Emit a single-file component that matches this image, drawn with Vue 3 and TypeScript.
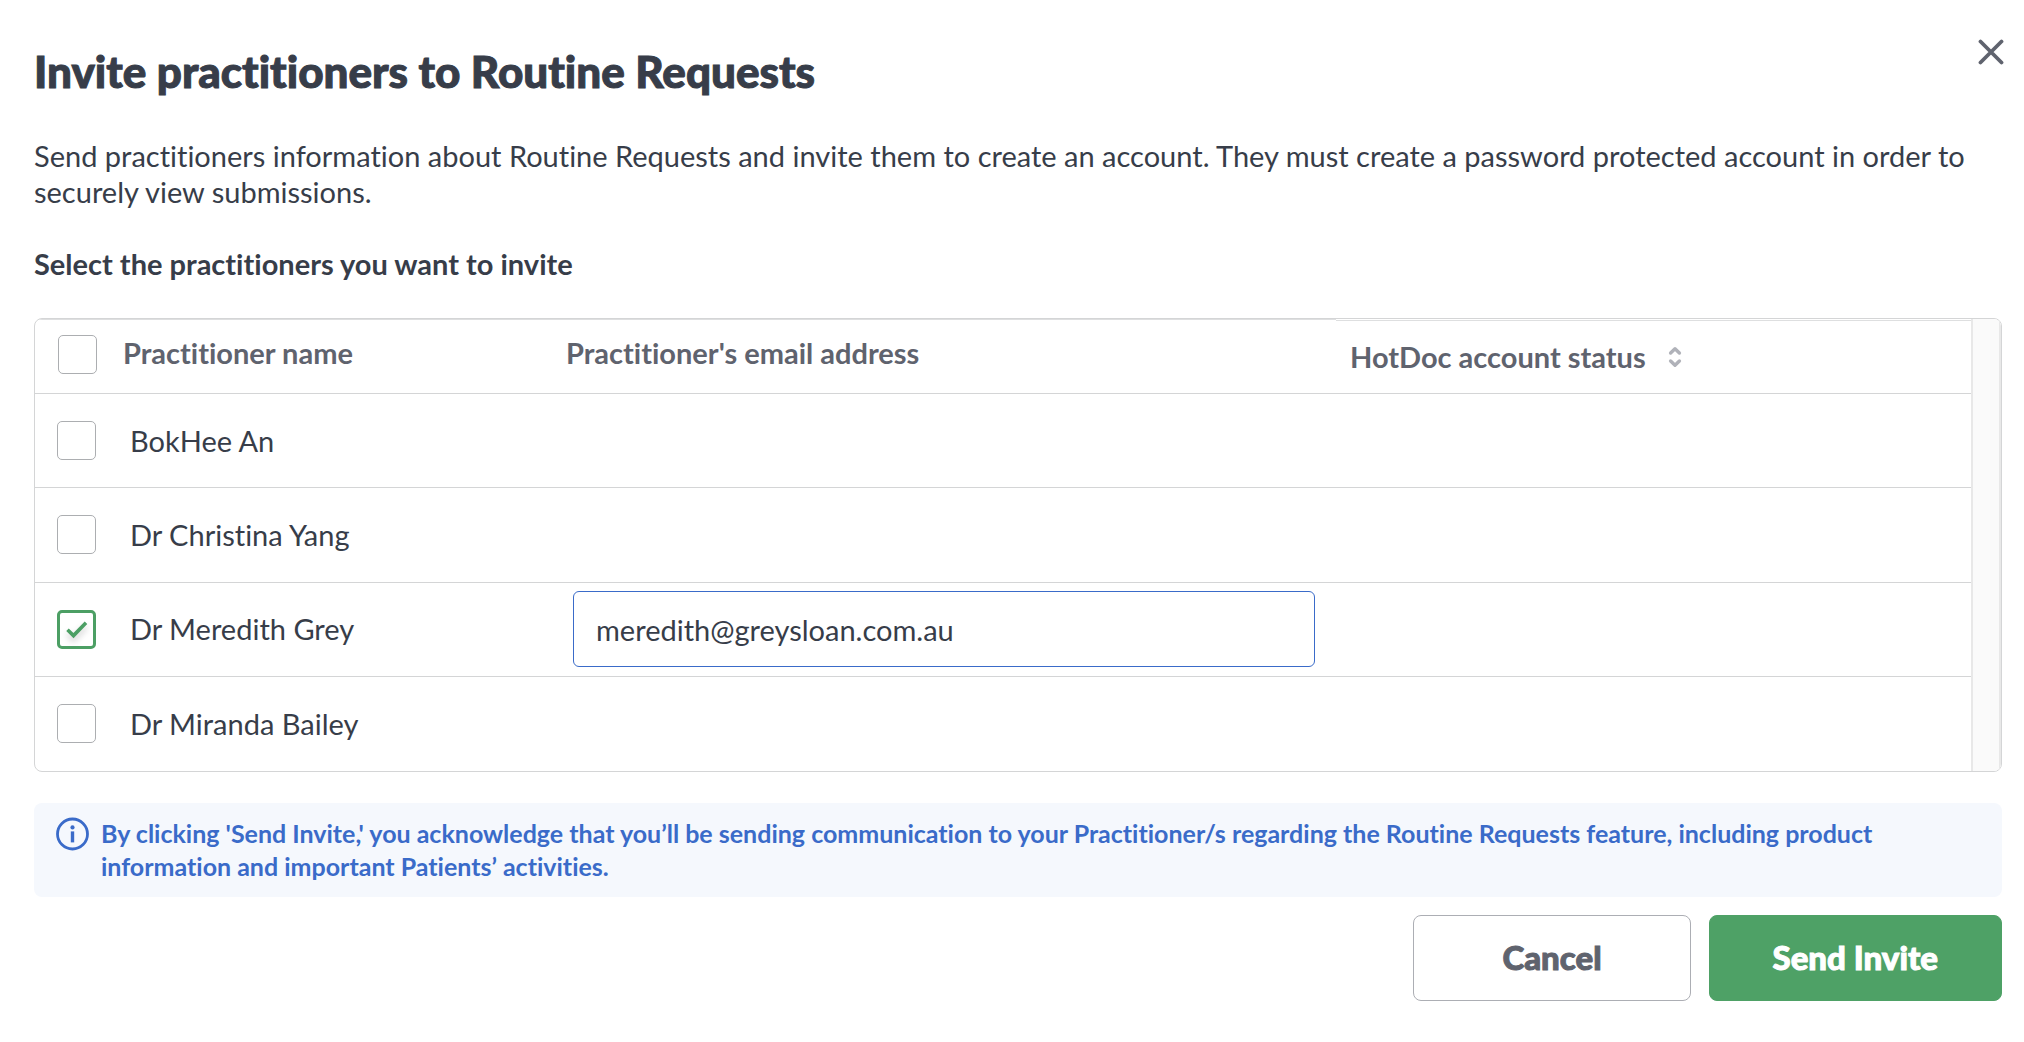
<script setup lang="ts">
import { reactive } from 'vue'

interface Practitioner {
  id: number
  name: string
  email: string
  selected: boolean
}

const practitioners = reactive<Practitioner[]>([
  { id: 1, name: 'BokHee An', email: '', selected: false },
  { id: 2, name: 'Dr Christina Yang', email: '', selected: false },
  { id: 3, name: 'Dr Meredith Grey', email: 'meredith@greysloan.com.au', selected: true },
  { id: 4, name: 'Dr Miranda Bailey', email: '', selected: false },
])

function toggleAll(event: Event) {
  const checked = (event.target as HTMLInputElement).checked
  practitioners.forEach((p) => {
    p.selected = checked
  })
}
</script>

<template>
  <main class="dialog" role="dialog" aria-labelledby="dialog-title">
    <header class="dialog-header">
      <h1 id="dialog-title">Invite practitioners to Routine Requests</h1>
      <button class="close" type="button" aria-label="Close">
        <svg viewBox="0 0 26 26" width="26" height="26" aria-hidden="true">
          <path d="M2.5 2.5 23.5 23.5M23.5 2.5 2.5 23.5" fill="none" stroke="#5f636e" stroke-width="3.8" stroke-linecap="round" />
        </svg>
      </button>
    </header>

    <p class="intro">
      Send practitioners information about Routine Requests and invite them to create an account. They must create a
      password protected account in order to securely view submissions.
    </p>
    <h2>Select the practitioners you want to invite</h2>

    <div class="table-frame">
      <table>
        <colgroup>
          <col class="col-check" />
          <col class="col-name" />
          <col class="col-email" />
          <col />
        </colgroup>
        <thead>
          <tr>
            <th class="check-cell" scope="col">
              <span class="check">
                <input type="checkbox" aria-label="Select all practitioners" @change="toggleAll" />
              </span>
            </th>
            <th scope="col">Practitioner name</th>
            <th scope="col">Practitioner's email address</th>
            <th class="status-head" scope="col">
              <button class="sort" type="button">
                HotDoc account status
                <svg viewBox="0 0 14 22" width="14" height="22" aria-hidden="true">
                  <path d="M2.6 7 7 2.8 11.4 7M2.6 15 7 19.2 11.4 15" fill="none" stroke="#b0b2b9" stroke-width="3.4" stroke-linecap="round" stroke-linejoin="round" />
                </svg>
              </button>
            </th>
          </tr>
        </thead>
        <tbody>
          <tr v-for="p in practitioners" :key="p.id">
            <td class="check-cell">
              <span class="check">
                <input :id="`practitioner-${p.id}`" v-model="p.selected" type="checkbox" />
                <svg v-if="p.selected" class="tick" viewBox="0 0 39 39" aria-hidden="true">
                  <path d="M10.5 19.8 16.5 25.6 29 12.8" fill="none" stroke="#4c9f64" stroke-width="3.6" />
                </svg>
              </span>
            </td>
            <td class="name-cell">
              <label :for="`practitioner-${p.id}`">{{ p.name }}</label>
            </td>
            <td class="email-cell">
              <input v-if="p.selected" v-model="p.email" class="email" type="email" :aria-label="`Email address for ${p.name}`" />
            </td>
            <td></td>
          </tr>
        </tbody>
      </table>
      <div class="scroll-track"></div>
    </div>

    <div class="notice">
      <svg viewBox="0 0 34 34" width="34" height="34" aria-hidden="true">
        <circle cx="16.5" cy="17" r="15" fill="none" stroke="#3a6bc9" stroke-width="2.8" />
        <circle cx="16.5" cy="10.4" r="2.1" fill="#3a6bc9" />
        <path d="M16.5 14.4V25.4" stroke="#3a6bc9" stroke-width="3.4" />
      </svg>
      <p>
        By clicking 'Send Invite,' you acknowledge that you’ll be sending communication to your Practitioner/s regarding
        the Routine Requests feature, including product information and important Patients’ activities.
      </p>
    </div>

    <footer class="actions">
      <button class="btn cancel" type="button">Cancel</button>
      <button class="btn send" type="button">Send Invite</button>
    </footer>
  </main>
</template>

<style>
body {
  background: #fff;
}
</style>

<style scoped>
.dialog {
  box-sizing: border-box;
  padding: 36px 22px 40px 34px;
  font-family: Lato, "Liberation Sans", sans-serif;
  font-size: 29px;
  line-height: 36px;
  font-variant-ligatures: none;
  color: #373d49;
}
.dialog-header {
  display: flex;
  justify-content: space-between;
  align-items: flex-start;
}
h1 {
  margin: 0;
  font-size: 44px;
  line-height: 70px;
  font-weight: 900;
  -webkit-text-stroke: 1px currentColor;
}
button {
  font-family: inherit;
  font-variant-ligatures: inherit;
  cursor: pointer;
}
.close {
  display: flex;
  margin: 3px -2px 0 0;
  padding: 0;
  border: 0;
  background: none;
}
.intro {
  margin: 32px 0 36px;
}
h2 {
  margin: 0 0 36px;
  font-size: 29px;
  line-height: 36px;
  font-weight: 700;
}
.table-frame {
  display: flex;
  border: 1px solid #d4d5d6;
  border-radius: 8px;
  overflow: hidden;
}
table {
  flex: 1;
  height: 452px;
  table-layout: fixed;
  border-collapse: separate;
  border-spacing: 0;
}
.col-check {
  width: 88px;
}
.col-name {
  width: 443px;
}
.col-email {
  width: 770px;
}
th,
td {
  box-sizing: border-box;
  padding: 0;
  text-align: left;
}
td {
  height: 94px;
}
th {
  height: 75px;
  padding-bottom: 8px;
  border-top: 1px solid #dedfe0;
  border-bottom: 1px solid #d4d5d6;
  font-weight: 700;
  color: #5f636e;
}
tbody tr:not(:last-child) td {
  border-bottom: 1px solid #d4d5d6;
}
.check-cell {
  padding-left: 22px;
}
th.check-cell {
  padding: 0 0 4px 23px;
}
.status-head {
  padding: 0 0 0 14px;
  border-top-color: #fff;
  box-shadow: inset 0 1px #dedfe0;
}
.sort {
  display: flex;
  align-items: center;
  gap: 22px;
  padding: 0;
  border: 0;
  background: none;
  font-size: 29px;
  line-height: 36px;
  font-weight: 700;
  color: inherit;
}
.check {
  display: flex;
  position: relative;
  width: 39px;
}
.check input {
  appearance: none;
  box-sizing: border-box;
  width: 39px;
  height: 39px;
  margin: 0;
  border: 1px solid #acaeb1;
  border-radius: 5px;
  background: #fff;
}
.check input:checked {
  border: 3px solid #4c9f64;
}
.tick {
  position: absolute;
  inset: 0;
  pointer-events: none;
  filter: drop-shadow(0 4px 3px rgba(0, 0, 0, 0.2));
}
.name-cell {
  padding-left: 7px;
}
.email-cell {
  padding: 0 21px 0 7px;
}
.email {
  display: block;
  box-sizing: border-box;
  width: 100%;
  height: 76px;
  padding: 0 22px;
  border: 1px solid #3a6bc9;
  border-radius: 6px;
  background: #fff;
  font-family: inherit;
  font-size: 29px;
  color: inherit;
}
.scroll-track {
  box-sizing: border-box;
  width: 30px;
  border: solid #e8e8e8;
  border-width: 0 2px;
  background: #fafafa;
}
.notice {
  display: flex;
  gap: 11px;
  margin-top: 31px;
  padding: 14px 22px;
  border-radius: 8px;
  background: #f5f8fd;
  color: #3a6bc9;
  font-size: 25px;
  line-height: 33px;
  font-weight: 700;
}
.notice svg {
  flex: none;
}
.notice p {
  margin: 0;
}
.actions {
  display: flex;
  justify-content: flex-end;
  gap: 18px;
  margin-top: 18px;
}
.btn {
  box-sizing: border-box;
  height: 86px;
  padding: 0 63px 2px;
  border-radius: 8px;
  font-size: 33px;
  font-weight: 900;
  -webkit-text-stroke: 1px currentColor;
}
.cancel {
  padding: 0 88px 2px;
  border: 1px solid #acaeb4;
  background: #fff;
  color: #5f636e;
}
.send {
  border: 1px solid #4ea166;
  background: #4ea166;
  color: #fff;
}
</style>
